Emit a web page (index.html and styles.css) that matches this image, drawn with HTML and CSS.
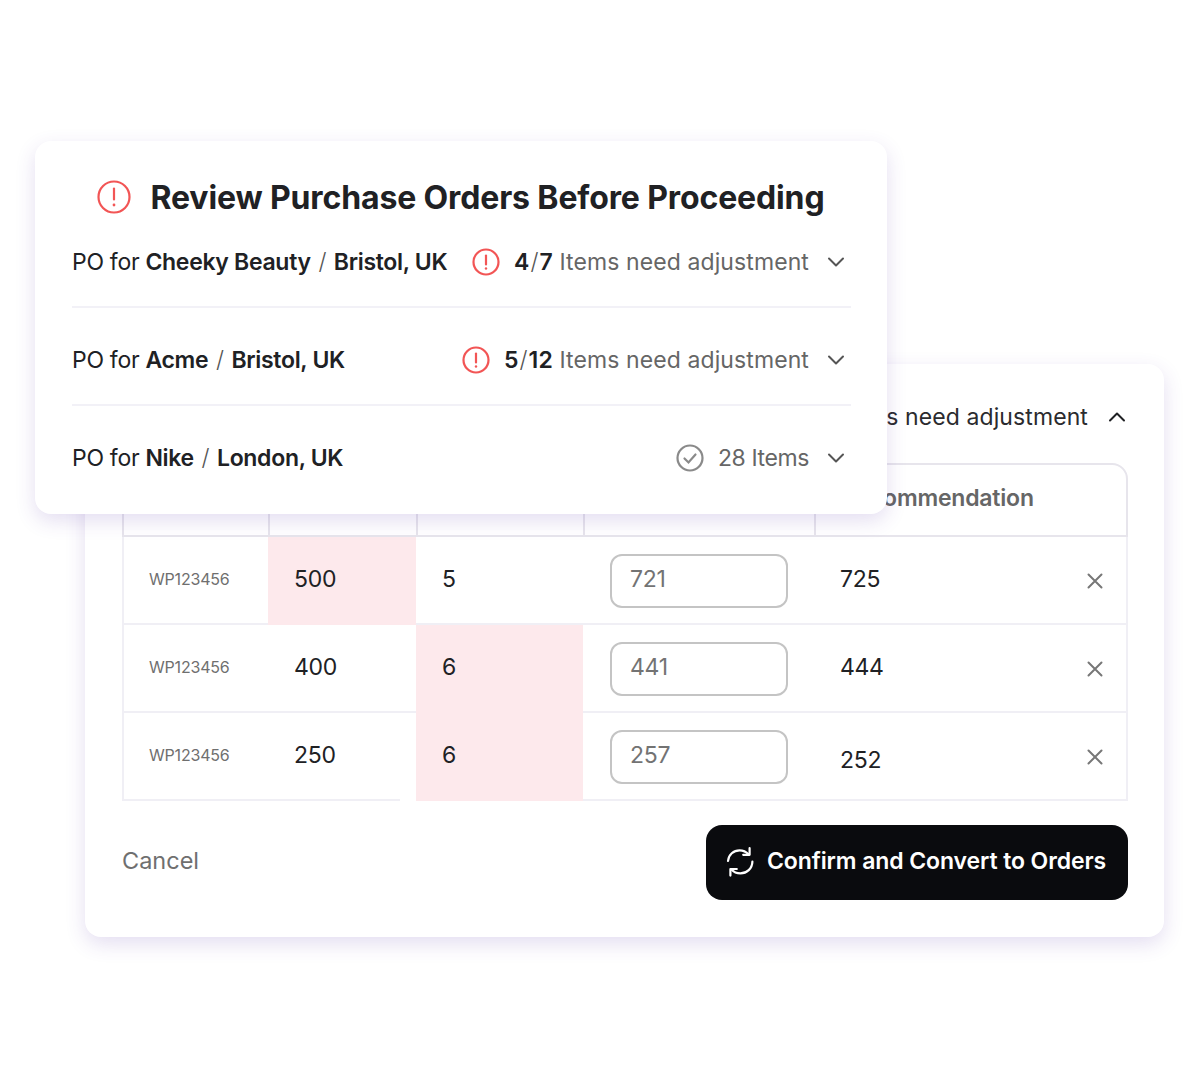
FILE: index.html
```html
<!DOCTYPE html>
<html lang="en">
<head>
    <meta charset="UTF-8">
    <meta name="viewport" content="width=device-width, initial-scale=1.0">
    <title>Review Purchase Orders</title>
    <link rel="stylesheet" href="styles.css">
</head>
<body>
    <div class="stage">
        <section class="card card-back">
            <div class="back-head">
                <span>4/7 Items need adjustment</span>
                <svg class="chev chev-dark" viewBox="0 0 18 10"><path d="M2 8.5 9 1.5l7 7"/></svg>
            </div>
            <div class="table">
                <div class="row row-head">
                    <div class="cell">SKU</div>
                    <div class="cell">Qty</div>
                    <div class="cell">MOQ</div>
                    <div class="cell">Adjusted</div>
                    <div class="cell cell-last">Recommendation</div>
                </div>
                <div class="row">
                    <div class="cell sku">WP123456</div>
                    <div class="cell pink">500</div>
                    <div class="cell">5</div>
                    <div class="cell"><div class="qty-input">721</div></div>
                    <div class="cell cell-last">725 <svg class="close" viewBox="0 0 16 16"><path d="M1.5 1.5l13 13M14.5 1.5l-13 13"/></svg></div>
                </div>
                <div class="row">
                    <div class="cell sku">WP123456</div>
                    <div class="cell">400</div>
                    <div class="cell pink">6</div>
                    <div class="cell"><div class="qty-input">441</div></div>
                    <div class="cell cell-last">444 <svg class="close" viewBox="0 0 16 16"><path d="M1.5 1.5l13 13M14.5 1.5l-13 13"/></svg></div>
                </div>
                <div class="row row-end">
                    <div class="cell sku">WP123456</div>
                    <div class="cell cell-short">250</div>
                    <div class="cell pink">6</div>
                    <div class="cell"><div class="qty-input">257</div></div>
                    <div class="cell cell-last"><span class="low">252</span> <svg class="close" viewBox="0 0 16 16"><path d="M1.5 1.5l13 13M14.5 1.5l-13 13"/></svg></div>
                </div>
            </div>
            <div class="actions">
                <span class="cancel">Cancel</span>
                <button type="button" class="confirm">
                    <svg viewBox="0 0 28 30"><path d="M2 14C2.6 7.6 7.6 3.4 13.6 3.4c3.4 0 6.4 1.2 8.9 3.9M26.4 14.6C26.2 21.6 20.8 26.4 14.4 26.4c-3.4 0-6.6-1.2-9-3.9"/><path d="M23.6 1.2v6.6h-6.4M4.4 28.6v-6.6h6.4"/></svg>
                    Confirm and Convert to Orders
                </button>
            </div>
        </section>

        <section class="card card-front">
            <h1 class="title">
                <svg class="alert alert-big" viewBox="0 0 34 34"><circle cx="17" cy="17" r="15.5"/><path d="M17 8.5v11"/><circle class="dot" cx="17" cy="25" r="1.4"/></svg>
                Review Purchase Orders Before Proceeding
            </h1>
            <div class="po po-first">
                <span>PO for <b>Cheeky Beauty</b> <i>/</i> <b>Bristol, UK</b></span>
                <span class="status">
                    <svg class="alert" viewBox="0 0 28 28"><circle cx="14" cy="14" r="12.5"/><path d="M14 7.5v9"/><circle class="dot" cx="14" cy="20.5" r="1.2"/></svg>
                    <span class="count"><b>4</b><i>/</i><b>7</b> Items need adjustment</span>
                </span>
                <svg class="chev" viewBox="0 0 18 10"><path d="M2 1.5l7 7 7-7"/></svg>
            </div>
            <div class="po">
                <span>PO for <b>Acme</b> <i>/</i> <b>Bristol, UK</b></span>
                <span class="status">
                    <svg class="alert" viewBox="0 0 28 28"><circle cx="14" cy="14" r="12.5"/><path d="M14 7.5v9"/><circle class="dot" cx="14" cy="20.5" r="1.2"/></svg>
                    <span class="count"><b>5</b><i>/</i><b>12</b> Items need adjustment</span>
                </span>
                <svg class="chev" viewBox="0 0 18 10"><path d="M2 1.5l7 7 7-7"/></svg>
            </div>
            <div class="po po-end">
                <span>PO for <b>Nike</b> <i>/</i> <b>London, UK</b></span>
                <span class="status">
                    <svg class="ok" viewBox="0 0 28 28"><circle cx="14" cy="14" r="12.5"/><path d="M8.5 14.5l4 4 7-8"/></svg>
                    <span class="count count-plain">28 Items</span>
                </span>
                <svg class="chev" viewBox="0 0 18 10"><path d="M2 1.5l7 7 7-7"/></svg>
            </div>
        </section>
    </div>
</body>
</html>
```

FILE: styles.css
```css
* {
    box-sizing: border-box;
}
body {
    margin: 0;
    background: #fff;
    font-family: "Inter", "Lato", sans-serif;
    color: #202124;
}
.stage {
    position: relative;
    width: 1200px;
    height: 1080px;
    overflow: hidden;
}
.card {
    position: absolute;
    background: #fff;
    border-radius: 16px;
    box-shadow: 0 7px 20px rgba(90, 50, 170, 0.16);
}
.card-back {
    left: 85px;
    top: 364px;
    width: 1079px;
    height: 573px;
    padding: 0 37px;
}
.card-front {
    left: 35px;
    top: 141px;
    width: 852px;
    height: 373px;
    padding: 37px 36px 0 37px;
}

/* front card */
.title {
    display: flex;
    align-items: center;
    justify-content: center;
    gap: 20px;
    height: 38px;
    margin: 0;
    padding-right: 2px;
    font-size: 32px;
    font-weight: 700;
    letter-spacing: -0.13px;
    white-space: nowrap;
}
.po {
    display: flex;
    align-items: center;
    height: 98px;
    padding: 8px 6px 0 0;
    border-bottom: 2px solid #f2f1f7;
    font-size: 23px;
    letter-spacing: -0.3px;
}
.po-first {
    height: 92px;
    padding-top: 2px;
}
.po-end {
    padding-top: 6px;
    border-bottom: 0;
}
.po b {
    font-weight: 600;
}
.po i {
    margin: 0 1.5px;
    font-style: normal;
    font-weight: 300;
    color: #555;
}
.status {
    display: flex;
    align-items: center;
    gap: 14px;
    margin-left: auto;
}
.count {
    color: #666;
    font-weight: 400;
    letter-spacing: 0.1px;
}
.count-plain {
    letter-spacing: -0.4px;
}
.count b {
    color: #202124;
}
.count i {
    margin: 0 1px;
}
.alert, .ok {
    width: 28px;
    height: 28px;
    fill: none;
    stroke-width: 2.2;
    stroke-linecap: round;
}
.alert {
    stroke: #f25555;
}
.alert-big {
    width: 34px;
    height: 34px;
}
.alert .dot {
    fill: #f25555;
    stroke: none;
}
.ok {
    stroke: #8a8a8a;
}
.chev {
    width: 18px;
    height: 10px;
    margin-left: 18px;
    fill: none;
    stroke: #555;
    stroke-width: 2;
    stroke-linecap: round;
    stroke-linejoin: round;
}
.chev-dark {
    stroke: #202124;
    margin-left: 20px;
    margin-right: 1px;
}

/* back card */
.back-head {
    display: flex;
    align-items: center;
    justify-content: flex-end;
    height: 99px;
    padding-top: 6px;
    font-size: 23px;
    letter-spacing: 0.1px;
    color: #2b2b2e;
}
.table {
    width: 1006px;
}
.row {
    display: grid;
    grid-template-columns: 146px 148px 167px 231px 314px;
    height: 88px;
    font-size: 23px;
    letter-spacing: -0.3px;
}
.row-head {
    height: 74px;
    font-size: 23px;
    font-weight: 600;
    letter-spacing: -0.2px;
    color: #666;
    border: 2px solid #e7e5ec;
    border-radius: 0 16px 0 0;
}
.cell {
    display: flex;
    align-items: center;
    padding-left: 26px;
    padding-bottom: 2px;
    border-bottom: 2px solid #f0eff5;
}
.row:not(.row-head) .cell:first-child {
    border-left: 2px solid #f0eff5;
}
.row-head .cell {
    padding-bottom: 4px;
    border-bottom: 0;
    border-right: 2px solid #e7e5ec;
}
.row-head .cell-last {
    border-right: 0;
}
.sku {
    padding-left: 25px;
    font-size: 16px;
    letter-spacing: -0.2px;
    color: #6f6f6f;
}
.pink {
    background: #fde9ec;
    border-bottom-color: #fde9ec;
}
.cell-short {
    margin-right: 16px;
}
.qty-input {
    display: flex;
    align-items: center;
    width: 178px;
    height: 54px;
    margin: 4px 0 0 1px;
    padding: 0 0 4px 18px;
    border: 2px solid #c4c4c4;
    border-radius: 12px;
    color: #737373;
}
.cell-last {
    justify-content: space-between;
    padding-right: 23px;
    border-right: 2px solid #f0eff5;
}
.low {
    padding-top: 10px;
}
.close {
    width: 16px;
    height: 16px;
    margin-top: 4px;
    fill: none;
    stroke: #777;
    stroke-width: 2;
    stroke-linecap: round;
}
.actions {
    display: flex;
    align-items: center;
    justify-content: space-between;
    width: 1006px;
    margin-top: 24px;
}
.cancel {
    padding-bottom: 4px;
    font-size: 23.5px;
    color: #6f6f6f;
}
.confirm {
    display: flex;
    align-items: center;
    gap: 13px;
    width: 422px;
    height: 75px;
    padding: 0 0 4px 20px;
    border: 0;
    border-radius: 16px;
    background: #0a0b0e;
    color: #fff;
    font-family: inherit;
    font-size: 23px;
    font-weight: 600;
    letter-spacing: -0.1px;
    white-space: nowrap;
}
.confirm svg {
    width: 28px;
    height: 30px;
    margin-top: 3px;
    fill: none;
    stroke: #fff;
    stroke-width: 2.2;
    stroke-linecap: round;
    stroke-linejoin: round;
}
```
